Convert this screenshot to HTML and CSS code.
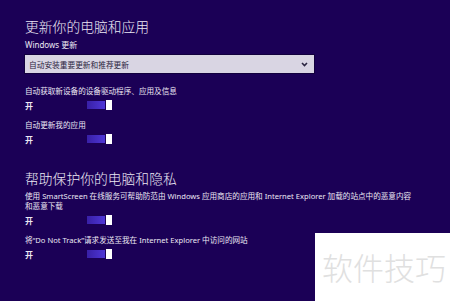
FILE: index.html
```html
<!DOCTYPE html>
<html lang="zh-CN">
<head>
  <meta charset="UTF-8">
  <meta name="viewport" content="width=device-width, initial-scale=1.0">
  <title>更新和恢复</title>
  <link rel="stylesheet" href="styles.css">
</head>
<body>
  <div class="page">
    <!-- 更新 -->
    <h1 class="section-title">更新你的电脑和应用</h1>
    <div class="subhead">Windows 更新</div>
    <div class="select">
      <span>自动安装重要更新和推荐更新</span>
      <svg class="chevron" width="7" height="5" viewBox="0 0 7 5"><path d="M1 1 L3.5 3.5 L6 1" fill="none" stroke="#2a2440" stroke-width="1.6"/></svg>
    </div>

    <div class="setting first">
      <div class="label">自动获取新设备的设备驱动程序、应用及信息</div>
      <div class="toggle-row"><span class="state">开</span><span class="toggle"><i></i></span></div>
    </div>

    <div class="setting">
      <div class="label">自动更新我的应用</div>
      <div class="toggle-row"><span class="state">开</span><span class="toggle"><i></i></span></div>
    </div>

    <!-- 隐私 -->
    <h1 class="section-title second">帮助保护你的电脑和隐私</h1>

    <div class="setting tight">
      <div class="label wide">使用 SmartScreen 在线服务可帮助防范由 Windows 应用商店的应用和 Internet Explorer 加载的站点中的恶意内容和恶意下载</div>
      <div class="toggle-row"><span class="state">开</span><span class="toggle"><i></i></span></div>
    </div>

    <div class="setting">
      <div class="label">将“Do Not Track”请求发送至我在 Internet Explorer 中访问的网站</div>
      <div class="toggle-row"><span class="state">开</span><span class="toggle"><i></i></span></div>
    </div>
  </div>

  <!-- 水印 -->
  <div class="watermark">软件技巧</div>
</body>
</html>
```

FILE: styles.css
```css
:root {
  --bg-color: #1b0056;
  --text-color: #ece8f4;
  --track-color: #4f36d6;
  --select-bg: #d9d5e3;
}

* {
  box-sizing: border-box;
}

body {
  margin: 0;
  width: 450px;
  height: 301px;
  overflow: hidden;
  background-color: var(--bg-color);
  color: var(--text-color);
  font-family: "Noto Sans", "Noto Sans CJK SC", sans-serif;
  position: relative;
}

.page {
  padding: 17px 0 0 25px;
}

/* 标题 */
.section-title {
  margin: 0;
  font-size: 13.8px;
  font-weight: 300;
  line-height: 19px;
  font-family: "Noto Sans CJK SC", sans-serif;
}

.section-title.second {
  margin-top: 25px;
}

.subhead {
  margin-top: 4px;
  font-size: 8px;
  line-height: 10px;
}

/* 下拉框 */
.select {
  margin-top: 5px;
  width: 289px;
  height: 18px;
  padding: 0 6px 0 4px;
  display: flex;
  align-items: center;
  justify-content: space-between;
  background-color: var(--select-bg);
  color: #2a2440;
  font-size: 7.7px;
  box-shadow: 0 0 0 1px #12003d;
}

/* 设置项 */
.setting {
  margin-top: 10px;
}

.setting.first {
  margin-top: 13px;
}

.setting.tight {
  margin-top: 4px;
}

.label {
  font-size: 7.6px;
  line-height: 10px;
}

.label.wide {
  max-width: 393px;
  line-height: 9.5px;
}

.toggle-row {
  margin-top: 4px;
  height: 10px;
  display: flex;
  align-items: center;
}

.state {
  width: 62px;
  font-size: 8px;
  font-weight: 700;
}

.toggle {
  width: 25px;
  height: 10px;
  display: flex;
  align-items: center;
  gap: 1px;
}

.toggle::before {
  content: "";
  flex: 1;
  height: 8px;
  background: linear-gradient(to right, #3820a6, var(--track-color));
}

.toggle i {
  width: 6px;
  height: 10px;
  background-color: #fff;
}

/* 水印 */
.watermark {
  position: absolute;
  left: 315px;
  top: 233px;
  right: 0;
  bottom: 0;
  background-color: #fff;
  color: #e0e0e0;
  font-family: "Noto Sans CJK SC", sans-serif;
  font-weight: 300;
  font-size: 31px;
  line-height: 1;
  padding: 18px 0 0 7px;
  white-space: nowrap;
}
```
